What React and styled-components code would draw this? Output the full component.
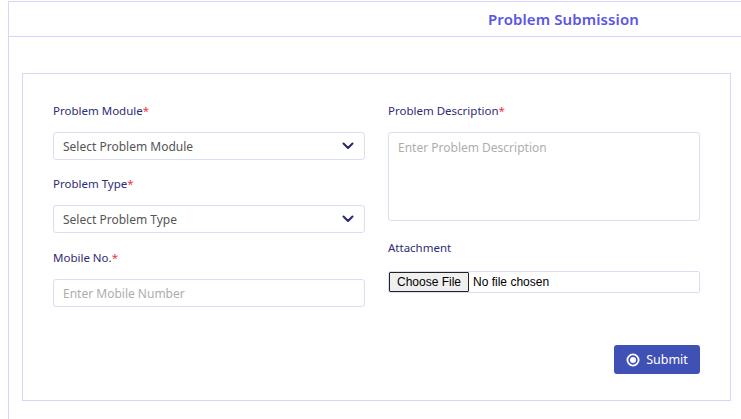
import styled, { createGlobalStyle } from "styled-components";

const GlobalStyle = createGlobalStyle`
  body {
    margin: 0;
    background: #fff;
    font-family: "Noto Sans", "Open Sans", sans-serif;
    overflow: hidden;
  }
`;

const Chevron = () => (
  <svg width="12" height="8" viewBox="0 0 12 8">
    <polyline
      points="1.5,1.5 6,6 10.5,1.5"
      fill="none"
      stroke="#26266e"
      strokeWidth="2"
      strokeLinecap="round"
      strokeLinejoin="round"
    />
  </svg>
);

const SubmitIcon = () => (
  <svg width="14" height="14" viewBox="0 0 14 14">
    <circle cx="7" cy="7" r="5.6" fill="none" stroke="#fff" strokeWidth="1.8" />
    <circle cx="7" cy="7" r="3" fill="#fff" />
  </svg>
);

const App = () => {
  return (
    <>
      <GlobalStyle />
      <Page>
        <Card>
          <Header>
            <Title>Problem Submission</Title>
          </Header>
          <Body>
            <FormCard>
              <Column>
                <Field $gap={15}>
                  <Label>
                    Problem Module<Star>*</Star>
                  </Label>
                  <Select>
                    <span>Select Problem Module</span>
                    <Chevron />
                  </Select>
                </Field>
                <Field $gap={16}>
                  <Label>
                    Problem Type<Star>*</Star>
                  </Label>
                  <Select>
                    <span>Select Problem Type</span>
                    <Chevron />
                  </Select>
                </Field>
                <Field>
                  <Label>
                    Mobile No.<Star>*</Star>
                  </Label>
                  <Input type="text" placeholder="Enter Mobile Number" />
                </Field>
              </Column>
              <Column>
                <Field $gap={18}>
                  <Label>
                    Problem Description<Star>*</Star>
                  </Label>
                  <TextArea placeholder="Enter Problem Description" />
                </Field>
                <Field $gap={52}>
                  <Label $space={15}>Attachment</Label>
                  <FileInput type="file" />
                </Field>
                <Actions>
                  <SubmitButton type="button">
                    <SubmitIcon />
                    Submit
                  </SubmitButton>
                </Actions>
              </Column>
            </FormCard>
          </Body>
        </Card>
      </Page>
    </>
  );
};

const Page = styled.div`
  padding: 1px 0 0 8px;
`;

const Card = styled.div`
  box-sizing: border-box;
  min-height: calc(100vh - 1px);
  border: 1px solid #dcd3fb;
  border-right: none;
  border-bottom: none;
`;

const Header = styled.div`
  height: 34px;
  border-bottom: 1px solid #dcd3fb;
  display: flex;
  align-items: center;
  padding-left: 479px;
`;

const Title = styled.h2`
  margin: 0;
  font-size: 15px;
  font-weight: 600;
  color: #5a55e6;
  letter-spacing: 0.1px;
`;

const Body = styled.div`
  padding: 36px 0 0 13px;
`;

const FormCard = styled.div`
  width: 647px;
  border: 1px solid #dcd3fb;
  padding: 28px 30px 26px 30px;
  display: grid;
  grid-template-columns: 312px 312px;
  column-gap: 23px;
`;

const Column = styled.div`
  display: flex;
  flex-direction: column;
`;

const Field = styled.div`
  display: flex;
  flex-direction: column;
  margin-bottom: ${(p) => p.$gap || 0}px;
`;

const Label = styled.label`
  font-size: 11.5px;
  line-height: 17px;
  color: #2e2c78;
  margin-bottom: ${(p) => p.$space || 13}px;
`;

const Star = styled.span`
  color: #f0304a;
`;

const Select = styled.div`
  box-sizing: border-box;
  height: 28px;
  border: 1px solid #dcdcf6;
  border-radius: 3px;
  display: flex;
  align-items: center;
  justify-content: space-between;
  padding: 0 10px 0 9px;
  font-size: 12px;
  color: #555;
`;

const Input = styled.input`
  box-sizing: border-box;
  height: 28px;
  border: 1px solid #dcdcf6;
  border-radius: 3px;
  padding: 0 9px;
  font-family: "Noto Sans", sans-serif;
  font-size: 12px;
  outline: none;
  &::placeholder {
    color: #adadad;
  }
`;

const TextArea = styled.textarea`
  box-sizing: border-box;
  height: 89px;
  border: 1px solid #dcdcf6;
  border-radius: 3px;
  padding: 6px 9px;
  font-family: "Noto Sans", sans-serif;
  font-size: 12px;
  resize: none;
  outline: none;
  &::placeholder {
    color: #adadad;
  }
`;

const FileInput = styled.input`
  box-sizing: border-box;
  height: 22px;
  border: 1px solid #dcdcf6;
  border-radius: 2px;
  padding: 0;
  font-family: "Liberation Sans", Arial, sans-serif;
  font-size: 12px;
  color: #000;
  &::file-selector-button {
    height: 20px;
    margin: 0 4px 0 0;
    padding: 0 7px;
    border: 1px solid #222;
    border-radius: 1px;
    background: #efefef;
    font-family: "Liberation Sans", Arial, sans-serif;
    font-size: 12px;
    color: #000;
  }
`;

const Actions = styled.div`
  display: flex;
  justify-content: flex-end;
`;

const SubmitButton = styled.button`
  height: 29px;
  width: 86px;
  border: none;
  border-radius: 3px;
  background: #3f51b5;
  color: #fff;
  display: flex;
  align-items: center;
  justify-content: center;
  gap: 6px;
  font-family: "Noto Sans", sans-serif;
  font-size: 12.5px;
  cursor: pointer;
`;

export default App;
